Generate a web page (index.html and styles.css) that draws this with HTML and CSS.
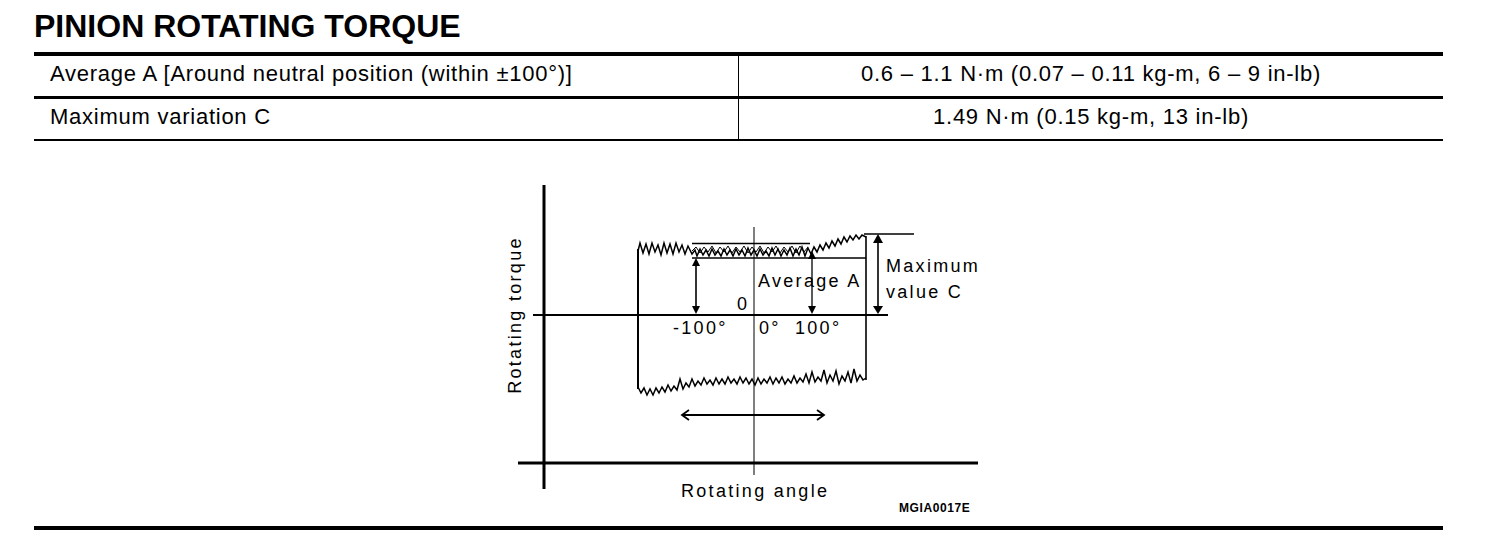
FILE: index.html
```html
<!DOCTYPE html>
<html lang="en">
<head>
<meta charset="utf-8">
<title>Pinion Rotating Torque</title>
<link rel="stylesheet" href="styles.css">
</head>
<body>
<div class="page">
  <h1 class="title">PINION ROTATING TORQUE</h1>
  <div class="spec">
    <div class="row">
      <div class="cell label">Average A [Around neutral position (within ±100°)]</div>
      <div class="cell value">0.6 – 1.1 N·m (0.07 – 0.11 kg-m, 6 – 9 in-lb)</div>
    </div>
    <div class="row">
      <div class="cell label">Maximum variation C</div>
      <div class="cell value">1.49 N·m (0.15 kg-m, 13 in-lb)</div>
    </div>
  </div>
  <figure class="diagram">
    <svg class="chart" width="500" height="340" viewBox="500 175 500 340" xmlns="http://www.w3.org/2000/svg">
      <g stroke="#000" fill="none">
        <!-- axes -->
        <line x1="544" y1="185" x2="544" y2="489" stroke-width="3"/>
        <line x1="518" y1="463" x2="978" y2="463" stroke-width="3"/>
        <line x1="533" y1="315" x2="888" y2="315" stroke-width="2"/>
        <line x1="754" y1="227" x2="754" y2="475" stroke-width="1"/>
        <!-- loop sides -->
        <line x1="638" y1="249" x2="638" y2="389" stroke-width="2"/>
        <line x1="866" y1="236" x2="866" y2="380" stroke-width="1.6"/>
        <!-- reference lines -->
        <line x1="692" y1="243.5" x2="810" y2="243.5" stroke-width="1.3"/>
        <line x1="692" y1="258" x2="866" y2="258" stroke-width="1.6"/>
        <line x1="864" y1="234" x2="914" y2="234" stroke-width="1.3"/>
        <!-- traces -->
        <polyline stroke-width="1.5" points="638,251 640,243 643,253 646,244 649,254 652,243 655,252 658,245 661,255 664,243 667,253 670,244 673,254 676,243 679,252 682,245 685,254 688,246 692,254 695,250 697,256 700,249 703,255 706,250 709,256 712,249 715,255 718,251 721,256 724,249 727,255 730,250 733,256 736,249 739,255 742,250 745,256 748,248 751,255 754,250 757,256 760,249 763,255 766,251 769,256 772,248 775,255 778,249 781,256 784,250 787,255 790,248 793,256 796,249 799,255 802,247 805,256 808,248 811,254 814,247 817,252 820,245 823,250 826,243 829,248 832,241 835,246 838,239 841,244 844,237 847,242 850,236 853,240 856,235 859,239 862,235 866,237"/>
        <polyline stroke-width="1" points="692,251 696,247 700,253 704,247 708,252 712,246 716,253 720,247 724,252 728,246 732,253 736,247 740,252 744,246 748,253 752,247 756,252 760,246 764,253 768,247 772,252 776,246 780,253 784,247 788,252 792,246 796,253 800,246 804,252 808,247"/>
        <polyline stroke-width="1.5" points="638,387 641,393 644,388 647,395 650,389 653,395 656,388 659,393 662,387 665,392 668,385 671,391 674,386 677,390 680,379 683,389 686,383 689,387 692,379 695,386 698,381 701,385 704,378 707,384 710,380 713,385 716,378 719,384 722,379 725,384 728,377 731,383 734,379 737,384 740,377 743,383 746,378 749,384 752,379 755,385 758,378 761,384 764,379 767,383 770,377 773,384 776,378 779,383 782,377 785,384 788,379 791,383 794,376 797,383 800,378 803,382 806,374 809,383 812,372 815,382 818,377 821,381 824,370 827,383 830,375 833,381 836,371 839,384 842,376 845,381 848,372 851,383 854,369 857,381 860,375 863,380 866,378"/>
        <!-- arrow shafts -->
        <line x1="696" y1="262" x2="696" y2="308" stroke-width="1.6"/>
        <line x1="812" y1="256" x2="812" y2="308" stroke-width="1.3"/>
        <line x1="878" y1="240" x2="878" y2="308" stroke-width="1.6"/>
        <!-- rotating double arrow -->
        <line x1="682" y1="415" x2="824" y2="415" stroke-width="1.8"/>
        <polyline stroke-width="1.8" points="689,410 682,415 689,420"/>
        <polyline stroke-width="1.8" points="817,410 824,415 817,420"/>
      </g>
      <g fill="#000">
        <polygon points="696,258 692,266 700,266"/>
        <polygon points="696,314 692,306 700,306"/>
        <polygon points="812,251 808,259 816,259"/>
        <polygon points="812,314 808,306 816,306"/>
        <polygon points="878,234 873,243 883,243"/>
        <polygon points="878,314 873,306 883,306"/>
      </g>
      <g class="lbl">
        <text x="758" y="287">Average A</text>
        <text x="886" y="272">Maximum</text>
        <text x="886" y="298">value C</text>
        <text x="737" y="310">0</text>
        <text x="673" y="334">-100°</text>
        <text x="759" y="334">0°</text>
        <text x="795" y="334">100°</text>
        <text x="681" y="497">Rotating angle</text>
        <text x="521" y="315" text-anchor="middle" transform="rotate(-90 521 315)">Rotating torque</text>
      </g>
      <text class="code" x="899" y="512">MGIA0017E</text>
    </svg>
  </figure>
  <div class="rule"></div>
</div>
</body>
</html>
```
FILE: styles.css
```css
html, body {
  margin: 0;
  padding: 0;
  background: #fff;
  color: #000;
  font-family: "Liberation Sans", Arial, Helvetica, sans-serif;
}

.page {
  width: 1409px;
  padding: 8px 0 0 34px;
}

.title {
  margin: 0 0 8px 0;
  font-size: 32px;
  line-height: 36px;
  font-weight: bold;
  letter-spacing: 0;
}

.spec {
  border-top: 4px solid #000;
  border-bottom: 2px solid #000;
}

.row {
  display: grid;
  grid-template-columns: 704px 1fr;
  height: 40px;
}

.row + .row {
  border-top: 3px solid #000;
}

.cell {
  display: flex;
  align-items: center;
  padding-bottom: 4px;
  font-size: 22px;
  letter-spacing: 0.75px;
  white-space: nowrap;
}

.label {
  padding-left: 16px;
}

.value {
  border-left: 1px solid #000;
  justify-content: center;
}

.diagram {
  margin: 34px 0 0 466px;
  height: 340px;
}

.chart {
  display: block;
}

.lbl text {
  font-family: "Liberation Sans", Arial, sans-serif;
  font-size: 18px;
  letter-spacing: 2.3px;
  fill: #000;
}

.code {
  font-family: "Liberation Sans", Arial, sans-serif;
  font-size: 12px;
  font-weight: bold;
  letter-spacing: 0.6px;
  fill: #000;
}

.rule {
  margin-top: 11px;
  height: 4px;
  background: #000;
}
```
